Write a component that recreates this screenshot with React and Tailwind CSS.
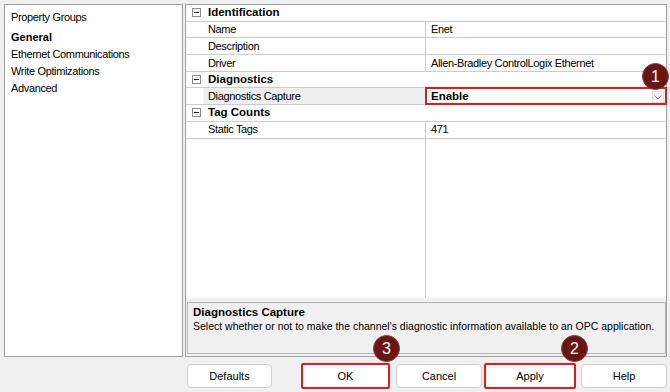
import React from "react";

const Minus = () => (
  <svg width="9" height="9" viewBox="0 0 9 9" className="block">
    <rect x="0.5" y="0.5" width="8" height="8" fill="white" stroke="#8c8c8c" />
    <line x1="2" y1="4.5" x2="7" y2="4.5" stroke="#222" />
  </svg>
);

const Category = ({ label }) => (
  <div className="flex items-center h-[16.7px] border-b border-[#cdcdcd]">
    <div className="w-[22px] pl-[6px] flex items-center">
      <Minus />
    </div>
    <span className="font-bold text-[11.5px] tracking-normal">{label}</span>
  </div>
);

const Row = ({ name, value, selected, children }) => (
  <div className="flex h-[16.7px] border-b border-[#cdcdcd]">
    <div className="w-[17px]" />
    <div
      className={`w-[223px] pl-[5px] border-r border-[#cdcdcd] flex items-center ${
        selected ? "bg-[#efefef]" : ""
      }`}
    >
      {name}
    </div>
    <div className="flex-1 pl-[5px] flex items-center relative">
      {value}
      {children}
    </div>
  </div>
);

const Badge = ({ n, className }) => (
  <div
    className={`absolute w-[27px] h-[27px] rounded-full bg-[#6a1414] border border-[#8a3a3a] text-white text-[16px] tracking-normal flex items-center justify-center ${className}`}
  >
    {n}
  </div>
);

export default function App() {
  return (
    <div className="w-[670px] h-[392px] bg-[#f0f0f0] font-['Liberation_Sans',Arial,sans-serif] text-[11px] tracking-[-0.35px] text-black relative overflow-hidden">
      <div className="flex pt-[4px] pl-[4px]">
        {/* property groups */}
        <div className="w-[179px] h-[353px] bg-white border border-[#a0a0a0] pl-[6px] pt-[4px]">
          <div className="h-[17px] leading-[17px]">Property Groups</div>
          <div className="h-[17px] leading-[17px] mt-[3px] font-bold tracking-normal">General</div>
          <div className="h-[17px] leading-[17px]">Ethernet Communications</div>
          <div className="h-[17px] leading-[17px]">Write Optimizations</div>
          <div className="h-[17px] leading-[17px]">Advanced</div>
        </div>

        {/* property grid */}
        <div className="ml-[2px] w-[482px] h-[353px] border border-[#a0a0a0] flex flex-col">
          <div className="h-[293px] bg-white flex flex-col">
            <Category label="Identification" />
            <Row name="Name" value="Enet" />
            <Row name="Description" value="" />
            <Row name="Driver" value="Allen-Bradley ControlLogix Ethernet" />
            <Category label="Diagnostics" />
            <Row
              name="Diagnostics Capture"
              selected
              value={<span className="font-bold text-[11.5px] tracking-normal">Enable</span>}
            >
              <div className="absolute -left-[1px] -top-[1px] -right-[1px] -bottom-[1px] border-2 border-[#e3191f]" />
              <div className="absolute right-[2px] top-[3px] w-[12px] h-[12px] bg-[#f7f7f7] border border-[#e2e2e2]">
                <svg width="10" height="10" viewBox="0 0 10 10" className="block">
                  <path d="M1.5 3.5 L5 7 L8.5 3.5" fill="none" stroke="#8a8a8a" strokeWidth="1" />
                </svg>
              </div>
            </Row>
            <Category label="Tag Counts" />
            <Row name="Static Tags" value="471" />
            <div className="flex-1 flex">
              <div className="w-[240px] border-r border-[#cdcdcd]" />
            </div>
          </div>
          <div className="h-[4px]" />
          <div className="h-[52px] ml-[1px] border border-[#b4b4b4] bg-[#f0f0f0] pl-[5px] pt-[2px]">
            <div className="font-bold text-[11.5px] leading-[14px] tracking-normal">Diagnostics Capture</div>
            <div className="leading-[14px] text-[10.5px] tracking-normal whitespace-nowrap">
              Select whether or not to make the channel's diagnostic information available to an OPC application.
            </div>
          </div>
        </div>
      </div>

      {/* buttons */}
      <div className="flex mt-[6px] pl-[187px] items-center tracking-normal">
        <button className="w-[85px] h-[24px] bg-white border border-[#d0d0d0] rounded-[4px]">Defaults</button>
        <button className="ml-[29px] w-[89px] h-[26px] bg-white border-2 border-[#e3191f] rounded-[2px]">OK</button>
        <button className="ml-[6px] w-[86px] h-[24px] bg-white border border-[#d0d0d0] rounded-[4px]">Cancel</button>
        <button className="ml-[2px] w-[92px] h-[26px] bg-white border-2 border-[#e3191f] rounded-[2px]">Apply</button>
        <button className="ml-[5px] w-[86px] h-[24px] bg-white border border-[#d0d0d0] rounded-[4px]">Help</button>
      </div>

      <Badge n="1" className="left-[642px] top-[63px]" />
      <Badge n="3" className="left-[373px] top-[335px]" />
      <Badge n="2" className="left-[561px] top-[335px]" />
    </div>
  );
}
